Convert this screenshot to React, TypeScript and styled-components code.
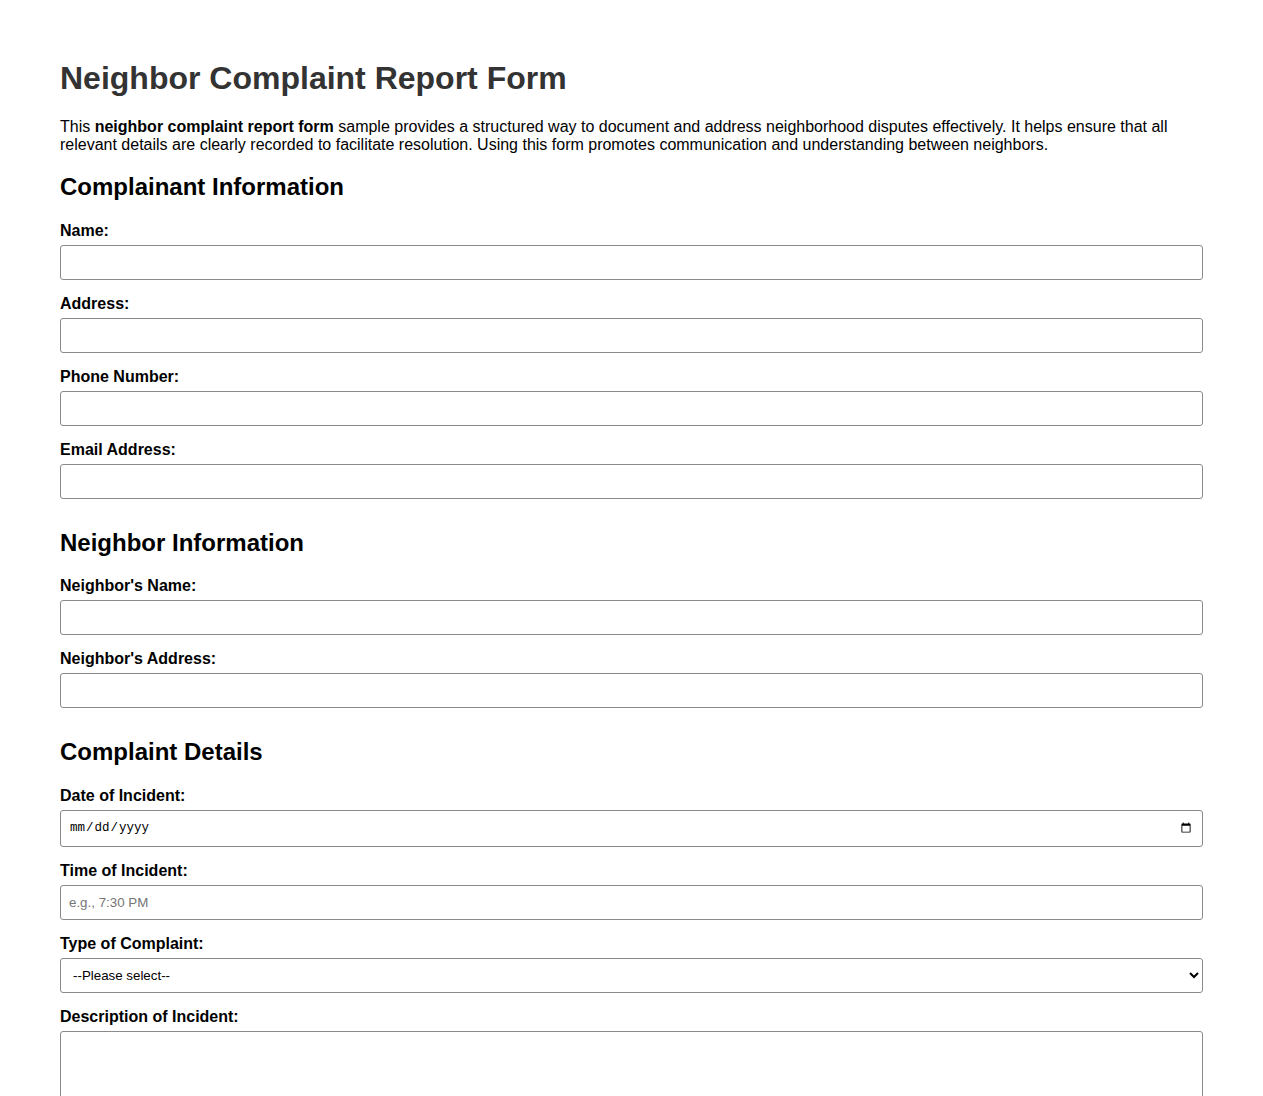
import React from "react";
import styled, { createGlobalStyle } from "styled-components";

const GlobalStyle = createGlobalStyle`
  html, body {
    margin: 0;
    padding: 0;
    background: #ffffff;
  }
  body {
    font-family: "Liberation Sans", Arial, sans-serif;
    color: #000000;
  }
  *, *::before, *::after {
    box-sizing: border-box;
  }
`;

const Page = styled.main`
  padding: 60px 60px 40px;
`;

const Title = styled.h1`
  margin: 0 0 21px;
  font-size: 32px;
  line-height: 37px;
  font-weight: bold;
  color: #333333;
`;

const Intro = styled.p`
  margin: 0 0 19px;
  font-size: 16px;
  line-height: 18px;
`;

const Form = styled.form`
  display: flex;
  flex-direction: column;
  gap: 30px;
`;

const Section = styled.section`
  display: flex;
  flex-direction: column;
`;

const SectionTitle = styled.h2`
  margin: 0 0 21px;
  font-size: 24px;
  line-height: 27.6px;
  font-weight: bold;
`;

const FieldList = styled.div`
  display: flex;
  flex-direction: column;
  gap: 15px;
`;

const Field = styled.div`
  display: flex;
  flex-direction: column;
`;

const Label = styled.label`
  display: block;
  margin-bottom: 5px;
  font-size: 16px;
  line-height: 18px;
  font-weight: bold;
`;

const controlBase = `
  width: 100%;
  margin: 0;
  padding: 8px;
  border: 1px solid #8a8a8a;
  border-radius: 3px;
  background: #ffffff;
  color: #000000;
  font-family: "Liberation Sans", Arial, sans-serif;
  font-size: 13.333px;
`;

const TextInput = styled.input`
  ${controlBase}
  height: 35px;

  &::placeholder {
    color: #757575;
  }
`;

const DateInput = styled.input`
  ${controlBase}
  height: 37px;
  font-family: "Liberation Mono", "DejaVu Sans Mono", monospace;
  font-size: 12.5px;
`;

const Select = styled.select`
  ${controlBase}
  height: 35px;
  padding: 8px 8px;
`;

const TextArea = styled.textarea`
  ${controlBase}
  height: 110px;
  resize: vertical;
`;

type FieldDef = {
  id: string;
  label: string;
  type?: string;
  placeholder?: string;
};

const complainant: FieldDef[] = [
  { id: "name", label: "Name:" },
  { id: "address", label: "Address:" },
  { id: "phone", label: "Phone Number:", type: "tel" },
  { id: "email", label: "Email Address:", type: "email" },
];

const neighbor: FieldDef[] = [
  { id: "neighborName", label: "Neighbor's Name:" },
  { id: "neighborAddress", label: "Neighbor's Address:" },
];

function TextFields({ fields }: { fields: FieldDef[] }) {
  return (
    <>
      {fields.map((f) => (
        <Field key={f.id}>
          <Label htmlFor={f.id}>{f.label}</Label>
          <TextInput id={f.id} name={f.id} type={f.type ?? "text"} placeholder={f.placeholder} />
        </Field>
      ))}
    </>
  );
}

export default function App() {
  return (
    <>
      <GlobalStyle />
      <Page>
        <Title>Neighbor Complaint Report Form</Title>
        <Intro>
          This <strong>neighbor complaint report form</strong> sample provides a structured way to
          document and address neighborhood disputes effectively. It helps ensure that all relevant
          details are clearly recorded to facilitate resolution. Using this form promotes
          communication and understanding between neighbors.
        </Intro>
        <Form onSubmit={(e) => e.preventDefault()}>
          <Section>
            <SectionTitle>Complainant Information</SectionTitle>
            <FieldList>
              <TextFields fields={complainant} />
            </FieldList>
          </Section>

          <Section>
            <SectionTitle>Neighbor Information</SectionTitle>
            <FieldList>
              <TextFields fields={neighbor} />
            </FieldList>
          </Section>

          <Section>
            <SectionTitle>Complaint Details</SectionTitle>
            <FieldList>
              <Field>
                <Label htmlFor="date">Date of Incident:</Label>
                <DateInput id="date" name="date" type="date" />
              </Field>
              <Field>
                <Label htmlFor="time">Time of Incident:</Label>
                <TextInput id="time" name="time" type="text" placeholder="e.g., 7:30 PM" />
              </Field>
              <Field>
                <Label htmlFor="type">Type of Complaint:</Label>
                <Select id="type" name="type" defaultValue="">
                  <option value="">--Please select--</option>
                  <option value="noise">Noise</option>
                  <option value="parking">Parking</option>
                  <option value="property">Property Damage</option>
                  <option value="pets">Pets</option>
                  <option value="other">Other</option>
                </Select>
              </Field>
              <Field>
                <Label htmlFor="description">Description of Incident:</Label>
                <TextArea id="description" name="description" />
              </Field>
            </FieldList>
          </Section>
        </Form>
      </Page>
    </>
  );
}
